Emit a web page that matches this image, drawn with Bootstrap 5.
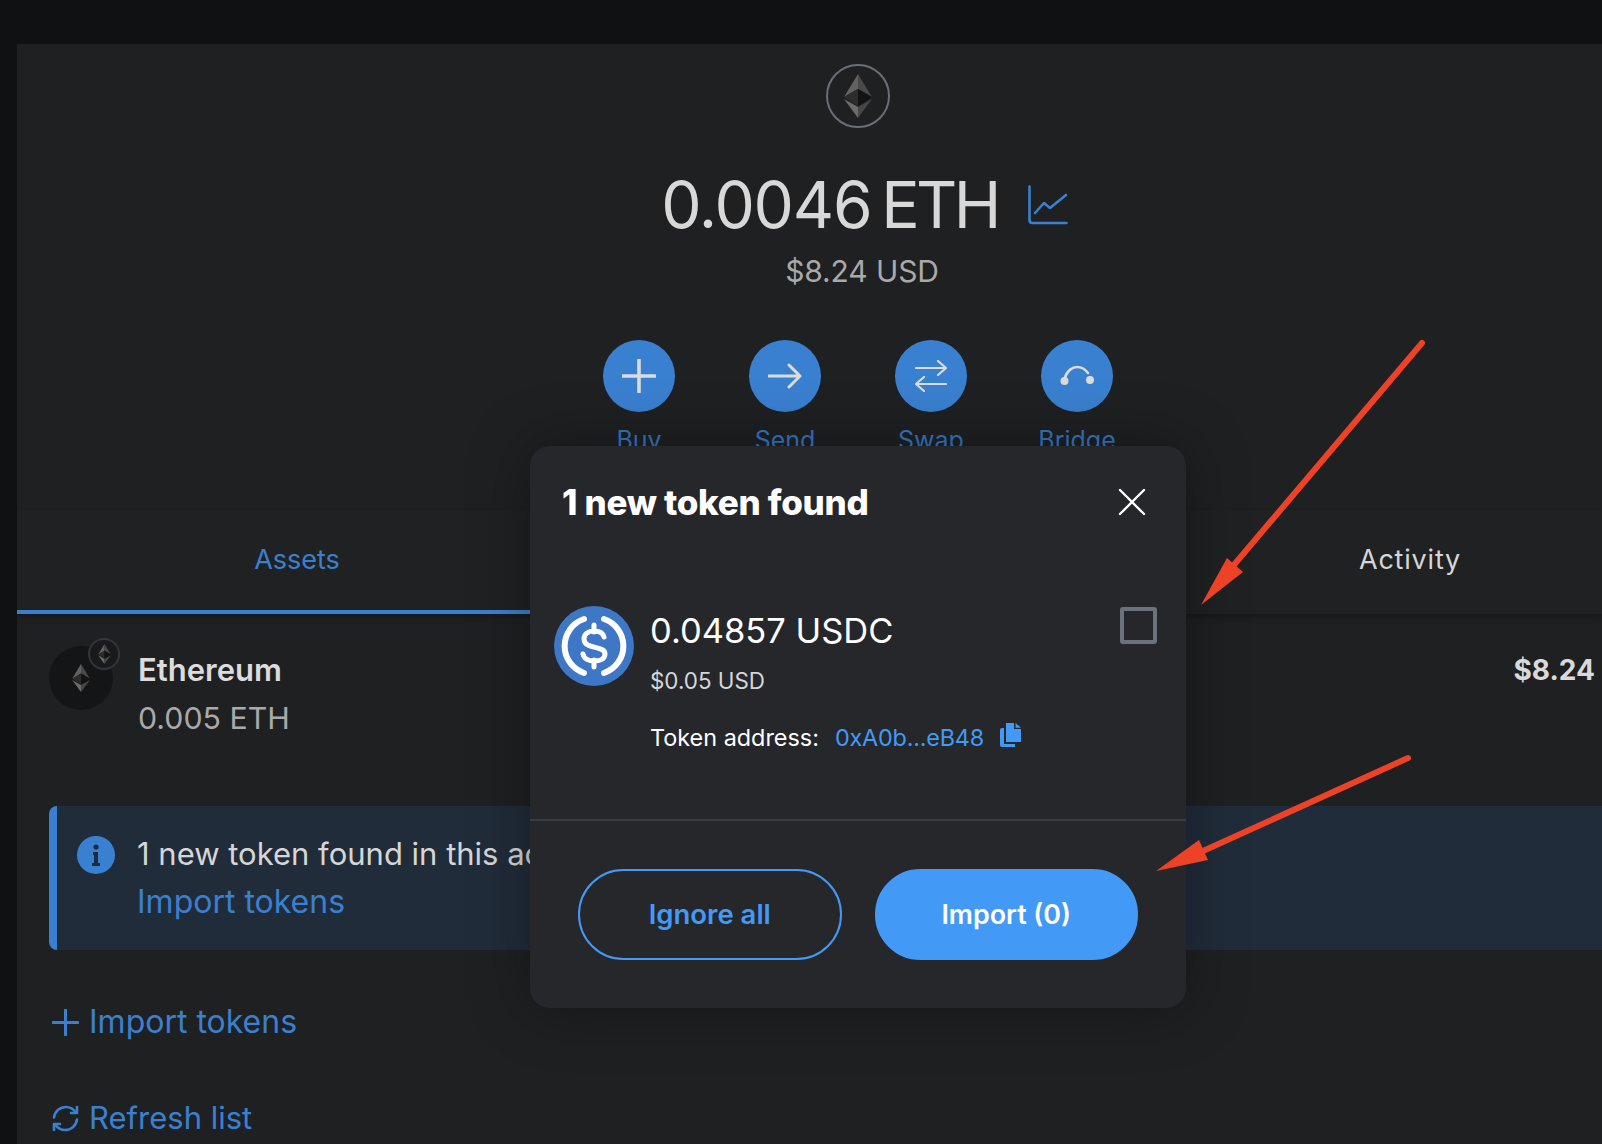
<!DOCTYPE html>
<html lang="en">
<head>
<meta charset="utf-8">
<title>Tokens</title>
<link rel="stylesheet" href="https://cdn.jsdelivr.net/npm/bootstrap@5.3.0/dist/css/bootstrap.min.css">
<style>
html,body{height:1144px;overflow:hidden}
body{background:#0f1113;font-family:"Inter","Liberation Sans",sans-serif;color:#d6d6d6;padding:44px 0 0 17px;position:relative;width:1602px}
.wallet{width:1585px;height:1100px;background:#1f2022;overflow:hidden}
.hero{padding-left:97px}
.logo-ring{width:64px;height:64px;border:2px solid #6a6f75;margin-top:20px}
.balance-line{margin-top:47px;margin-left:13px;height:60px;gap:30px}
.balance-text{font-size:64px;line-height:60px;color:#d8d8d8;letter-spacing:-1.200px;word-spacing:-7px}
.unit{letter-spacing:-3.600px}
.usd-line{font-size:30px;line-height:40px;color:#a9a9a9;margin-top:16px;margin-left:8px;letter-spacing:-.1px}
.actions{gap:74px;margin-top:49px}
.act{width:72px}
.act-circle{width:72px;height:72px;background:#3a80d0}
.act-label{font-size:25px;line-height:30px;color:#3477c2;margin-top:13px;white-space:nowrap}
.tabs{height:104px;margin-top:55px;background:#202123;box-shadow:0 3px 6px rgba(0,0,0,.3)}
.tab-one{width:560px;border-bottom:4px solid #3a80d0;color:#3a80d0;font-size:27px}
.tab-mid{width:553px}
.tab-three{width:472px;color:#d6d6d6;font-size:27px;letter-spacing:.8px;padding:0 0 4px 88px}
.asset-row{padding:32px 7px 0 32px}
.coin-wrap{width:64px;height:64px;position:relative}
.coin-big{width:64px;height:64px;background:#141517}
.coin-small{position:absolute;left:39px;top:-8px;width:32px;height:32px;background:#191a1c;border:2px solid #33363a}
.asset-name{font-size:31px;font-weight:600;line-height:36px;color:#dcdcdc;margin-top:6px}
.asset-amt{font-size:30.300px;line-height:36px;color:#a9a9a9;margin-top:12px}
.asset-val{font-size:28px;font-weight:700;line-height:36px;color:#d9d9d9;margin-top:6px}
.coin-text{margin-left:25px}
.notice{margin:70px 0 0 32px;height:144px;background:#212c3a;border-left:8px solid #3a80d0;border-radius:8px 0 0 8px;padding:46px 0 0 20px}
.info-dot{width:38px;height:38px;background:#3a80d0;flex:none;margin-top:-16px}
.notice-text{margin-left:22px;font-size:31px;line-height:48px;margin-top:-22px;white-space:nowrap;color:#d6d6d6}
.blue-link{color:#3a80d0;font-size:32px;line-height:48px}
.link-refresh{font-size:31px}
.link-row{margin-left:35px;gap:10px;height:48px}
.row-a{margin-top:48px}
.row-b{margin-top:48px}
.modal-card{position:absolute;left:530px;top:446px;width:656px;height:562px;background:#25272b;border-radius:20px;box-shadow:0 0 60px rgba(0,0,0,.35)}
.modal-top{height:112px;padding:0 40px 0 32px}
.modal-title{font-size:35px;font-weight:800;color:#fff;letter-spacing:-.3px;margin:0}
.token-row{padding:48px 29px 0 24px;height:261px}
.usdc{width:80px;height:80px;flex:none}
.token-body{margin-left:16px;flex:1}
.token-amt{font-size:34.500px;line-height:40px;color:#fff;margin-top:5px}
.token-fiat{font-size:22.400px;line-height:28px;color:#d6d6d6;margin-top:16px}
.token-addr{font-size:23.400px;line-height:28px;color:#fff;margin-top:29px}
.addr-val{color:#439af6;margin-left:16px;letter-spacing:-.2px}
.copy-glyph{margin-top:-1px}
.tick-box{width:37px;height:37px;border:4px solid #6a737d;border-radius:3px;flex:none;margin-top:1px}
.modal-foot{border-top:2px solid #3b3e43;padding:48px 48px 0;gap:33px}
.btn-pill{width:264px;height:91px;font-weight:600;border-radius:46px;border:2px solid #439af6;display:flex;align-items:center;justify-content:center}
.btn-pill.ghost{background:transparent;color:#439af6;font-size:27.500px}
.btn-pill.fill{background:#439af6;color:#fff;font-size:26.800px}
.marks{position:absolute;left:0;top:0;width:1602px;height:1144px;pointer-events:none}
</style>
</head>
<body>
<svg width="0" height="0" class="position-absolute">
<symbol id="eth" viewBox="0 0 28 44">
<polygon points="14,0 0,23 14,15" fill="#626262"/><polygon points="14,0 28,23 14,15" fill="#494949"/>
<polygon points="14,15 0,23 14,32" fill="#2c2c2c"/><polygon points="14,15 28,23 14,32" fill="#131313"/>
<polygon points="0,25 14,44 14,33" fill="#6c6c6c"/><polygon points="28,25 14,44 14,33" fill="#474747"/>
</symbol>
</svg>

<div class="wallet">
  <div class="hero d-flex flex-column align-items-center">
    <div class="logo-ring rounded-circle d-flex align-items-center justify-content-center">
      <svg width="28" height="44"><use href="#eth"/></svg>
    </div>
    <div class="balance-line d-flex align-items-center">
      <span class="balance-text">0.0046 <span class="unit">ETH</span></span>
      <svg width="40" height="40" viewBox="0 0 40 40" fill="none" stroke="#3a80d0" stroke-width="2.600" stroke-linecap="round" stroke-linejoin="round"><path d="M1.500 1.500V35q0 3 3 3h34"/><path d="M7 28l9-10 6 5L38 10"/></svg>
    </div>
    <div class="usd-line">$8.24 USD</div>
    <div class="actions d-flex">
      <div class="act d-flex flex-column align-items-center">
        <div class="act-circle rounded-circle d-flex align-items-center justify-content-center">
          <svg width="34" height="34" viewBox="0 0 34 34" stroke="#dcdcdc" stroke-width="3.600" stroke-linecap="round"><path d="M17 1v32M1 17h32"/></svg>
        </div>
        <div class="act-label">Buy</div>
      </div>
      <div class="act d-flex flex-column align-items-center">
        <div class="act-circle rounded-circle d-flex align-items-center justify-content-center">
          <svg width="34" height="26" viewBox="0 0 34 26" fill="none" stroke="#dcdcdc" stroke-width="3" stroke-linecap="round" stroke-linejoin="round"><path d="M1 13h31M21 2l11 11-11 11"/></svg>
        </div>
        <div class="act-label">Send</div>
      </div>
      <div class="act d-flex flex-column align-items-center">
        <div class="act-circle rounded-circle d-flex align-items-center justify-content-center">
          <svg width="32" height="32" viewBox="0 0 32 32" fill="none" stroke="#dcdcdc" stroke-width="2.200" stroke-linecap="round" stroke-linejoin="round"><path d="M1 8h30M23 1l8 7-8 7M31 24H1M9 17l-8 7 8 7"/></svg>
        </div>
        <div class="act-label">Swap</div>
      </div>
      <div class="act d-flex flex-column align-items-center">
        <div class="act-circle rounded-circle d-flex align-items-center justify-content-center">
          <svg width="34" height="22" viewBox="0 0 34 22" fill="#dcdcdc"><circle cx="4.500" cy="16" r="4"/><circle cx="30" cy="15" r="4"/><path d="M4.500 14C7 5 13 2 17 2s8 2 11 6" fill="none" stroke="#dcdcdc" stroke-width="2.600" stroke-linecap="round"/></svg>
        </div>
        <div class="act-label">Bridge</div>
      </div>
    </div>
  </div>

  <div class="tabs d-flex">
    <div class="tab-one d-flex align-items-center justify-content-center">Assets</div>
    <div class="tab-mid"></div>
    <div class="tab-three d-flex align-items-center justify-content-center">Activity</div>
  </div>

  <div class="asset-row d-flex justify-content-between">
    <div class="d-flex">
      <div class="coin-wrap">
        <div class="coin-big rounded-circle d-flex align-items-center justify-content-center"><svg width="18" height="28"><use href="#eth"/></svg></div>
        <div class="coin-small rounded-circle d-flex align-items-center justify-content-center"><svg width="13" height="20"><use href="#eth"/></svg></div>
      </div>
      <div class="coin-text">
        <div class="asset-name">Ethereum</div>
        <div class="asset-amt">0.005 ETH</div>
      </div>
    </div>
    <div class="asset-val">$8.24</div>
  </div>

  <div class="notice d-flex">
    <div class="info-dot rounded-circle d-flex align-items-center justify-content-center">
      <svg width="8" height="22" viewBox="0 0 8 22" fill="#202b3a"><circle cx="4" cy="3" r="2.600"/><path d="M1 8h5v11h2v3H0v-3h2v-8H1z"/></svg>
    </div>
    <div class="notice-text">1 new token found in this account<br><span class="blue-link">Import tokens</span></div>
  </div>

  <div class="link-row row-a d-flex align-items-center">
    <svg width="27" height="27" viewBox="0 0 27 27" stroke="#3a80d0" stroke-width="3" stroke-linecap="round"><path d="M13.500 1v25M1 13.500h25"/></svg>
    <span class="blue-link">Import tokens</span>
  </div>
  <div class="link-row row-b d-flex align-items-center">
    <svg width="27" height="27" viewBox="0 0 27 27" fill="none" stroke="#3a80d0" stroke-width="2.600" stroke-linecap="round" stroke-linejoin="round"><path d="M2 12.500C3 6 8 2 14 2c4 0 7.500 2 10 5.500M25 14.500C24 21 19 25 13 25c-4 0-7.500-2-10-5.500"/><path d="M25 2v6h-6M2 25v-6h6"/></svg>
    <span class="blue-link link-refresh">Refresh list</span>
  </div>
</div>

<div class="modal-card d-flex flex-column">
  <div class="modal-top d-flex align-items-center justify-content-between">
    <h2 class="modal-title">1 new token found</h2>
    <svg width="28" height="28" viewBox="0 0 28 28" stroke="#fff" stroke-width="2.400" stroke-linecap="round"><path d="M2 2l24 24M26 2L2 26"/></svg>
  </div>
  <div class="token-row d-flex">
    <svg class="usdc" viewBox="0 0 80 80">
      <circle cx="40" cy="40" r="40" fill="#3e77c6"/>
      <path d="M30 13A28.500 28.500 0 0 0 30 67M50 13A28.500 28.500 0 0 1 50 67" fill="none" stroke="#fff" stroke-width="6" stroke-linecap="round"/>
      <path d="M50 31c-1-4-5-6-10-6-6 0-10 3-10 8 0 11 21 6 21 15 0 5-5 7-11 7-5 0-10-2-11-7" fill="none" stroke="#fff" stroke-width="5" stroke-linecap="round"/>
      <path d="M40 19v7M40 54v7" stroke="#fff" stroke-width="5" stroke-linecap="round"/>
    </svg>
    <div class="token-body">
      <div class="token-amt">0.04857 USDC</div>
      <div class="token-fiat">$0.05 USD</div>
      <div class="token-addr d-flex align-items-start">Token address:<span class="addr-val">0xA0b...eB48</span>
        <svg class="copy-glyph ms-3" width="21" height="24" viewBox="0 0 21 24" fill="#439af6"><path d="M6 0h8v6h7v13H6z"/><path d="M15.500 0L21 4.800h-5.500z"/><path d="M2 5h2v16h11v3H2q-2 0-2-2V7q0-2 2-2z"/></svg>
      </div>
    </div>
    <div class="tick-box"></div>
  </div>
  <div class="modal-foot d-flex">
    <button type="button" class="btn btn-pill ghost">Ignore all</button>
    <button type="button" class="btn btn-pill fill">Import (0)</button>
  </div>
</div>

<svg class="marks" viewBox="0 0 1602 1144">
  <g stroke="#ee4226" stroke-width="6" stroke-linecap="round" fill="none">
    <path d="M1422 343L1233 566"/>
    <path d="M1408 758L1203 851"/>
  </g>
  <g fill="#ee4226">
    <path d="M1201 605L1227 558 1243 572Z"/>
    <path d="M1156 871L1199 840 1208 860Z"/>
  </g>
</svg>

<script src="https://cdn.jsdelivr.net/npm/bootstrap@5.3.0/dist/js/bootstrap.bundle.min.js"></script>
</body>
</html>
